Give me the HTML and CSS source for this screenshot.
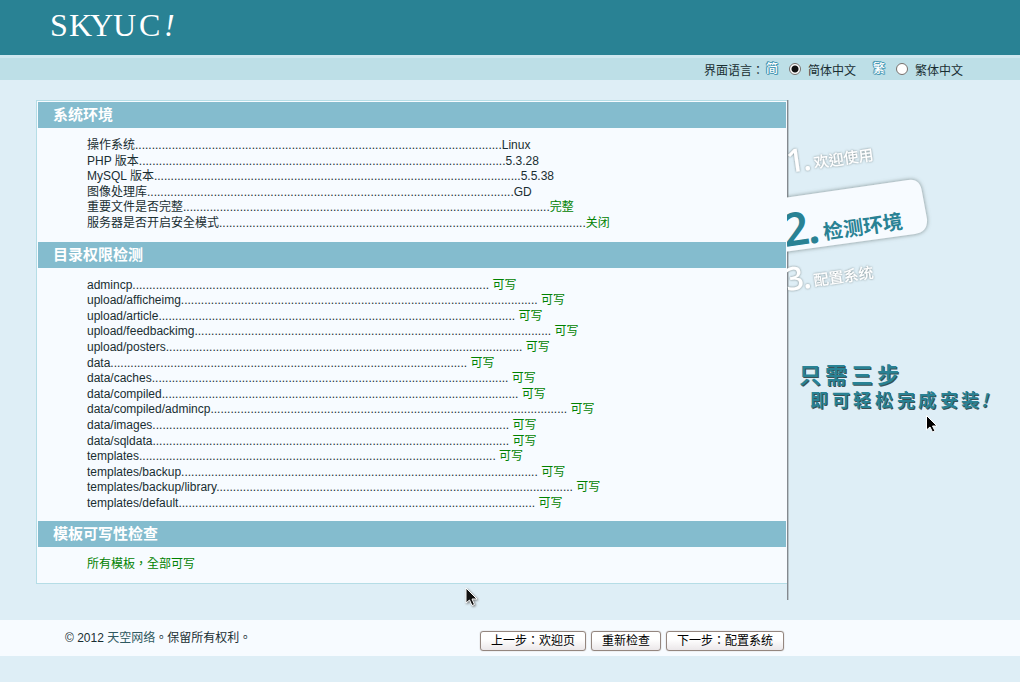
FILE: index.html
```html
<!DOCTYPE html>
<html lang="zh-TW">
<head>
<meta charset="utf-8">
<title>SKYUC! 检测环境</title>
<link rel="stylesheet" href="styles.css">
</head>
<body>
<header class="header">
  <svg class="logo" width="140" height="40" viewBox="0 0 140 40" role="img" aria-label="SKYUC!">
    <text x="0 19 40 63 89 114" y="31" class="logo-text">SKYUC<tspan class="logo-mark">!</tspan></text>
  </svg>
</header>

<form class="langbar">
  <span>界面语言：</span>
  <span class="lang-icon">简</span>
  <input class="radio" type="radio" name="lang" id="lang-cn" checked>
  <label for="lang-cn">简体中文</label>
  <span class="lang-icon lang-icon-second">繁</span>
  <input class="radio" type="radio" name="lang" id="lang-tw">
  <label for="lang-tw">繁体中文</label>
</form>

<div class="page">
  <main class="panel">
    <h2 class="title">系统环境</h2>
    <ul class="list" id="system"></ul>
    <h2 class="title">目录权限检测</h2>
    <ul class="list" id="folders"></ul>
    <h2 class="title">模板可写性检查</h2>
    <p class="list ok">所有模板，全部可写</p>
  </main>

  <aside class="steps">
    <svg width="233" height="500" viewBox="787 100 233 500">
      <defs>
        <filter id="soft" x="-20%" y="-20%" width="140%" height="150%">
          <feDropShadow dx="0" dy="0" stdDeviation="1" flood-color="#6c7a7c" flood-opacity="0.9"/>
        </filter>
        <filter id="card" x="-10%" y="-20%" width="120%" height="140%">
          <feDropShadow dx="0" dy="0" stdDeviation="2" flood-color="#6f7f7f" flood-opacity="0.9"/>
        </filter>
      </defs>
      <rect x="787" y="100" width="1" height="500" fill="#84898f"/>
      <rect x="788" y="100" width="1" height="500" fill="#b9c6cc"/>
      <path d="M770 200L908 180Q920 178 922 192L927 219Q928 232 915 234L770 254Z" fill="#f7fbff" filter="url(#card)"/>
      <g fill="#fff" filter="url(#soft)">
        <g transform="translate(788 173) rotate(-8)">
          <text x="0 16" y="0" class="num">1.</text>
          <text x="27" y="-1" class="step">欢迎使用</text>
        </g>
        <g transform="translate(787 291) rotate(-8)">
          <text x="0 17" y="0" class="num">3.</text>
          <text x="28" y="-1" class="step">配置系统</text>
        </g>
      </g>
      <g fill="#298294" transform="translate(785 247) rotate(-8)">
        <text x="0 24" y="0" class="num-now">2.</text>
        <text x="40" y="-2" class="step-now">检测环境</text>
      </g>
      <g class="slogan">
        <text x="799 825 851 877" y="383" class="slogan-big">只需三步</text>
        <text x="810 832 853 875 897 918 940 961" y="407" class="slogan-small">即可轻松完成安装</text>
        <text x="981" y="407" class="slogan-small slogan-mark">!</text>
      </g>
      <path transform="translate(926 415)" d="M.5.5V15L4 12L6.500 17L9 16L6.500 11H11Z" fill="#000" stroke="#fff"/>
    </svg>
  </aside>
</div>

<footer class="footer">
  <span>© 2012 <a class="link" href="#">天空网络</a>。保留所有权利。</span>
  <div class="buttons">
    <button class="btn" type="button">上一步：欢迎页</button>
    <button class="btn" type="button">重新检查</button>
    <button class="btn" type="button">下一步：配置系统</button>
  </div>
</footer>

<svg class="pointer" width="16" height="22" viewBox="0 0 16 22" aria-hidden="true">
  <path d="M1 1V16L4.500 13L7 18.500L9.500 17.500L7 12H12Z" fill="#111" stroke="#fff"/>
</svg>
<script src="main.js"></script>
</body>
</html>
```
FILE: styles.css
```css
* { box-sizing: border-box; }

body {
  margin: 0;
  background: #deeef6;
  color: #192e32;
  font-family: "Liberation Sans", "Noto Sans CJK TC", sans-serif;
  font-size: 12px;
  line-height: 1.3;
}

.header {
  height: 55px;
  padding: 5px 50px;
  background: #298294;
}

.logo { display: block; overflow: visible; }

.logo-text {
  fill: #fff;
  font-family: "Liberation Serif", serif;
  font-size: 32px;
}

.logo-mark { font-style: italic; }

.langbar {
  display: flex;
  justify-content: flex-end;
  align-items: center;
  height: 25px;
  padding: 5px 57px 0 0;
  border-top: 3px solid #cee7ef;
  background: #bddfe7;
}

.lang-icon {
  margin: -4px 11px 0 2px;
  color: #fff;
  font-weight: 500;
  text-shadow: 1px 0 #4a9ab5, -1px 0 #4a9ab5, 0 1px #4a9ab5, 0 -1px #4a9ab5,
    1px 1px #4a9ab5, -1px -1px #4a9ab5;
}

.lang-icon-second { margin-left: 17px; }

.radio {
  appearance: none;
  width: 12px;
  height: 12px;
  margin: -6px 7px 0 0;
  border: 1px solid #77706c;
  border-radius: 50%;
  background: #fff;
}

.radio:checked { background: radial-gradient(circle, #111 0 3px, #fff 4px); }

.page {
  display: flex;
  align-items: flex-start;
  padding: 20px 0 20px 36px;
}

.panel {
  flex: 1;
  padding: 1px 1px 0;
  border: 1px solid #b5dde6;
  border-right: 0;
  background: #f7fbff;
}

.title {
  margin: 0;
  padding: 3px 15px;
  background: #84bcce;
  color: #fff;
  font-size: 15px;
  line-height: 20px;
}

.list {
  margin: 0;
  padding: 10px 0 10px 49px;
  list-style: none;
  white-space: nowrap;
}

.ok { color: #008200; }

.steps { flex: none; }
.steps svg { display: block; }

.num { font: 500 32px "Noto Sans", sans-serif; }
.num-now { font: 600 46px "Noto Sans", sans-serif; }
.step { font: 500 15px "Noto Sans CJK SC", sans-serif; }
.step-now { font: 700 20px "Noto Sans CJK SC", sans-serif; }

.slogan {
  fill: #298294;
  font-family: "Noto Sans CJK SC", sans-serif;
  font-weight: 700;
  text-shadow: 1px 1px #3c5054;
}

.slogan-big { font-size: 22px; }
.slogan-small { font-size: 18px; }
.slogan-mark { font-style: italic; }

.footer {
  display: flex;
  justify-content: space-between;
  align-items: center;
  height: 36px;
  padding: 1px 236px 0 65px;
  background: #f7fbff;
}

.link { color: #2f5960; text-decoration: none; }

.buttons { display: flex; gap: 5px; padding-top: 5px; }

.btn {
  height: 20px;
  padding: 1px 10px 0;
  border: 1px solid #94867f;
  border-radius: 3px;
  background: linear-gradient(#fff 40%, #ebe7e9);
  box-shadow: 0 0 1px #94867f;
  color: #000;
  font: inherit;
}

.pointer {
  position: absolute;
  left: 465px;
  top: 587px;
  filter: drop-shadow(1px 1px 1px #777);
}
```
FILE: main.js
```js
const system = [
  ["操作系统", "Linux"],
  ["PHP 版本", "5.3.28"],
  ["MySQL 版本", "5.5.38"],
  ["图像处理库", "GD"],
  ["重要文件是否完整", "完整", true],
  ["服务器是否开启安全模式", "关闭", true]
];

const folders = [
  "admincp", "upload/afficheimg", "upload/article", "upload/feedbackimg",
  "upload/posters", "data", "data/caches", "data/compiled",
  "data/compiled/admincp", "data/images", "data/sqldata", "templates",
  "templates/backup", "templates/backup/library", "templates/default"
];

function addRow(list, label, value, ok) {
  const item = document.createElement("li");
  const result = document.createElement("span");
  result.textContent = value;
  if (ok) result.className = "ok";
  item.append(label, result);
  list.append(item);
}

const systemList = document.getElementById("system");
const folderList = document.getElementById("folders");

system.forEach(([name, value, ok]) => addRow(systemList, name + ".".repeat(110), value, ok));
folders.forEach(name => addRow(folderList, name + ".".repeat(107) + " ", "可写", true));
```
